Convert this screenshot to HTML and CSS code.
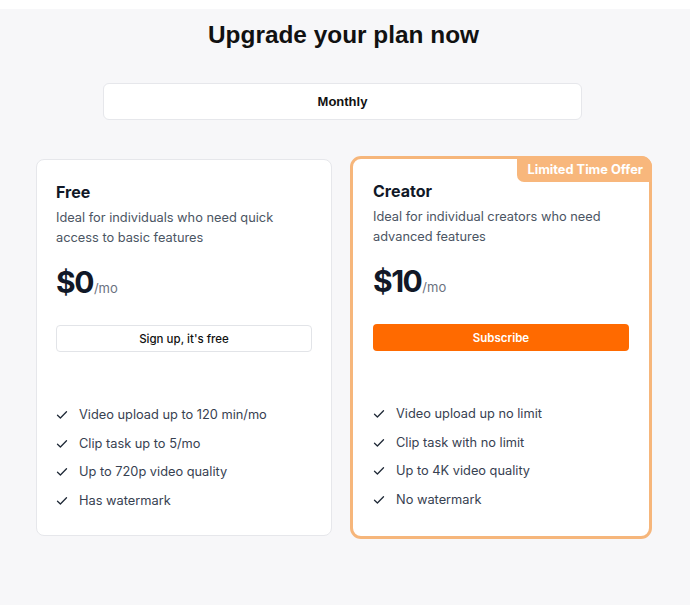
FILE: index.html
```html
<!DOCTYPE html>
<html lang="en">
<head>
<meta charset="utf-8">
<title>Upgrade your plan</title>
<link rel="stylesheet" href="styles.css">
</head>
<body>
<main class="page">
  <h1 class="title">Upgrade your plan now</h1>
  <div class="tabs"><span class="tab">Monthly</span></div>
  <section class="plans">
    <article class="card card-free">
      <h2 class="plan-name">Free</h2>
      <p class="plan-desc">Ideal for individuals who need quick access to basic features</p>
      <div class="price"><span class="amount">$0</span><span class="per">/mo</span></div>
      <button class="btn btn-outline">Sign up, it's free</button>
      <ul class="features">
        <li><svg class="check" viewBox="0 0 12 12"><path d="M1.5 6.3 L4.4 9 L10.5 2.8"/></svg>Video upload up to 120 min/mo</li>
        <li><svg class="check" viewBox="0 0 12 12"><path d="M1.5 6.3 L4.4 9 L10.5 2.8"/></svg>Clip task up to 5/mo</li>
        <li><svg class="check" viewBox="0 0 12 12"><path d="M1.5 6.3 L4.4 9 L10.5 2.8"/></svg>Up to 720p video quality</li>
        <li><svg class="check" viewBox="0 0 12 12"><path d="M1.5 6.3 L4.4 9 L10.5 2.8"/></svg>Has watermark</li>
      </ul>
    </article>
    <article class="card card-creator">
      <span class="badge">Limited Time Offer</span>
      <h2 class="plan-name">Creator</h2>
      <p class="plan-desc">Ideal for individual creators who need advanced features</p>
      <div class="price"><span class="amount">$10</span><span class="per">/mo</span></div>
      <button class="btn btn-primary">Subscribe</button>
      <ul class="features">
        <li><svg class="check" viewBox="0 0 12 12"><path d="M1.5 6.3 L4.4 9 L10.5 2.8"/></svg>Video upload up no limit</li>
        <li><svg class="check" viewBox="0 0 12 12"><path d="M1.5 6.3 L4.4 9 L10.5 2.8"/></svg>Clip task with no limit</li>
        <li><svg class="check" viewBox="0 0 12 12"><path d="M1.5 6.3 L4.4 9 L10.5 2.8"/></svg>Up to 4K video quality</li>
        <li><svg class="check" viewBox="0 0 12 12"><path d="M1.5 6.3 L4.4 9 L10.5 2.8"/></svg>No watermark</li>
      </ul>
    </article>
  </section>
</main>
</body>
</html>
```

FILE: styles.css
```css
* { box-sizing: border-box; }
html, body { margin: 0; padding: 0; background: #ffffff; }
body { font-family: Inter, "Noto Sans", sans-serif; }

.page {
  margin-top: 9px;
  background: #f7f7f9;
  min-height: 596px;
  padding-top: 10px;
  display: flex;
  flex-direction: column;
  align-items: center;
}

.title {
  margin: 0 3px 0 0;
  font-family: "Liberation Sans", Arial, sans-serif;
  font-size: 24.4px;
  line-height: 32px;
  font-weight: 700;
  color: #111111;
}

.tabs {
  margin-top: 32px;
  margin-right: 5px;
  width: 479px;
  height: 37px;
  background: #ffffff;
  border: 1px solid #e6e7eb;
  border-radius: 6px;
  display: flex;
  align-items: center;
  justify-content: center;
}
.tab {
  font-family: "Liberation Sans", Arial, sans-serif;
  font-size: 13px;
  font-weight: 700;
  color: #111111;
}

.plans {
  margin-top: 36px;
  display: grid;
  grid-template-columns: 296px 302px;
  column-gap: 18px;
  margin-right: 2px;
}

.card {
  position: relative;
  background: #ffffff;
  display: flex;
  flex-direction: column;
  padding: 20px 19px 24px;
}
.card-free {
  border: 1px solid #e6e7eb;
  border-radius: 8px;
  margin: 3px 0;
}
.card-creator {
  border: 3px solid #f6b67b;
  border-radius: 11px;
  padding: 20px 20px 24px;
}

.badge {
  position: absolute;
  top: -3px;
  right: -3px;
  height: 26px;
  padding: 0 9px 0 10px;
  display: flex;
  align-items: center;
  background: #f8b77c;
  color: #ffffff;
  font-size: 12.8px;
  font-weight: 700;
  border-radius: 0 11px 0 7px;
}

.plan-name {
  margin: 0;
  font-size: 16px;
  line-height: 24px;
  font-weight: 700;
  color: #111827;
}

.plan-desc {
  margin: 4px 0 0;
  font-size: 12.8px;
  line-height: 20px;
  color: #4b5563;
}

.price {
  margin-top: 16px;
  display: flex;
  align-items: baseline;
  height: 36px;
}
.amount {
  font-size: 30px;
  line-height: 36px;
  font-weight: 700;
  letter-spacing: -1.5px;
  color: #111827;
}
.per {
  font-size: 13px;
  color: #6b7280;
  margin-left: 1px;
}

.btn {
  margin-top: 25px;
  height: 27px;
  width: 100%;
  border-radius: 4px;
  font-family: Inter, "Noto Sans", sans-serif;
  font-size: 11.5px;
  cursor: pointer;
}
.btn-outline {
  background: #ffffff;
  border: 1px solid #e2e4e8;
  color: #111111;
  font-weight: 500;
}
.btn-primary {
  background: #ff6a00;
  border: none;
  color: #ffffff;
  font-weight: 600;
}

.features {
  list-style: none;
  margin: 53px 0 0;
  padding: 0;
  display: flex;
  flex-direction: column;
  gap: 8.7px;
}
.features li {
  display: flex;
  align-items: center;
  font-size: 12.8px;
  line-height: 20px;
  color: #374151;
}
.check {
  width: 12px;
  height: 12px;
  margin-right: 11px;
  flex-shrink: 0;
}
.check path {
  fill: none;
  stroke: #1f2937;
  stroke-width: 1.3;
  stroke-linecap: round;
  stroke-linejoin: round;
}
```
